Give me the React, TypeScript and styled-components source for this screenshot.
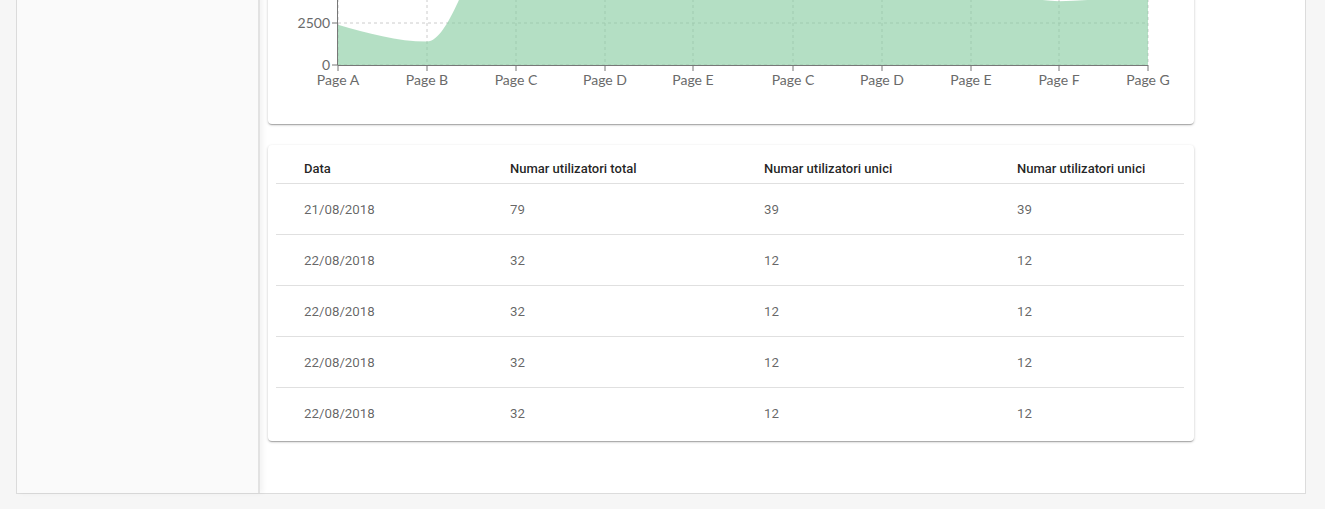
import React from "react";
import styled, { createGlobalStyle } from "styled-components";

const GlobalStyle = createGlobalStyle`
  *, *::before, *::after { box-sizing: border-box; }
  html, body { margin: 0; padding: 0; }
  body {
    background: #f6f6f6;
    font-family: Roboto, "Liberation Sans", Arial, sans-serif;
    overflow: hidden;
  }
`;

const Frame = styled.div`
  margin: -221px 19px 15px 16px;
  display: flex;
  border: 1px solid #dcdcdc;
  border-top: none;
  background: #fff;
  min-height: 700px;
`;

const Sidebar = styled.aside`
  width: 243px;
  flex: none;
  background: #fafafa;
  border-right: 2px solid #e2e2e2;
  box-shadow: 3px 0 5px rgba(0, 0, 0, 0.05);
  position: relative;
  z-index: 1;
`;

const Main = styled.main`
  flex: 1;
  padding: 20px 0 52px 8px;
  display: flex;
  flex-direction: column;
  gap: 21px;
`;

const Card = styled.section`
  width: 926px;
  background: #fff;
  border-radius: 4px;
  box-shadow: 0 1px 3px rgba(0, 0, 0, 0.2), 0 1px 1px rgba(0, 0, 0, 0.14),
    0 2px 1px -1px rgba(0, 0, 0, 0.12);
`;

const ChartCard = styled(Card)`
  padding: 16px 0 29px;
`;

const TableCard = styled(Card)`
  padding: 8px 10px 2px 8px;
`;

const ChartSvg = styled.svg`
  display: block;
  font-family: Lato, "Open Sans", sans-serif;
`;

const Table = styled.div`
  display: flex;
  flex-direction: column;
`;

const Row = styled.div<{ $head?: boolean }>`
  display: grid;
  grid-template-columns: 206px 254px 253px 1fr;
  align-items: center;
  height: ${(p) => (p.$head ? "31px" : "51px")};
  padding-left: 28px;
  border-bottom: 1px solid #e0e0e0;
  &:last-child { border-bottom: none; }
`;

const HeadCell = styled.div`
  font-size: 13px;
  font-weight: 500;
  color: rgba(0, 0, 0, 0.87);
  white-space: nowrap;
`;

const Cell = styled.div`
  font-size: 13.3px;
  color: rgba(0, 0, 0, 0.62);
  white-space: nowrap;
`;

type Pt = { x: number; y: number };

function monotonePath(pts: Pt[]): string {
  const n = pts.length;
  const sign = (v: number) => (v < 0 ? -1 : 1);
  const t: number[] = new Array(n).fill(0);
  for (let i = 1; i < n - 1; i++) {
    const h0 = pts[i].x - pts[i - 1].x;
    const h1 = pts[i + 1].x - pts[i].x;
    const s0 = (pts[i].y - pts[i - 1].y) / h0;
    const s1 = (pts[i + 1].y - pts[i].y) / h1;
    const p = (s0 * h1 + s1 * h0) / (h0 + h1);
    t[i] =
      (sign(s0) + sign(s1)) *
        Math.min(Math.abs(s0), Math.abs(s1), 0.5 * Math.abs(p)) || 0;
  }
  const h0 = pts[1].x - pts[0].x;
  t[0] = (3 * (pts[1].y - pts[0].y) / h0 - t[1]) / 2;
  const hn = pts[n - 1].x - pts[n - 2].x;
  t[n - 1] = (3 * (pts[n - 1].y - pts[n - 2].y) / hn - t[n - 2]) / 2;
  let d = `M${pts[0].x},${pts[0].y}`;
  for (let i = 0; i < n - 1; i++) {
    const a = pts[i];
    const b = pts[i + 1];
    const dx = (b.x - a.x) / 3;
    d += `C${a.x + dx},${a.y + dx * t[i]},${b.x - dx},${b.y - dx * t[i + 1]},${b.x},${b.y}`;
  }
  return d;
}

const data = [
  { name: "Page A", x: 70, v: 2400 },
  { name: "Page B", x: 159, v: 1398 },
  { name: "Page C", x: 248, v: 9800 },
  { name: "Page D", x: 337, v: 3908 },
  { name: "Page E", x: 425, v: 4800 },
  { name: "Page C", x: 525, v: 6200 },
  { name: "Page D", x: 614, v: 5400 },
  { name: "Page E", x: 703, v: 4800 },
  { name: "Page F", x: 791, v: 3800 },
  { name: "Page G", x: 880, v: 4300 },
];

const AXIS_Y = 250;
const LEFT_X = 70;
const RIGHT_X = 880;
const SCALE = 42 / 2500;
const yOf = (v: number) => AXIS_Y - v * SCALE;

const AreaChart: React.FC = () => {
  const pts = data.map((d) => ({ x: d.x, y: yOf(d.v) }));
  const line = monotonePath(pts);
  const area = `${line}L${RIGHT_X},${AXIS_Y}L${LEFT_X},${AXIS_Y}Z`;
  const yTicks = [0, 2500, 5000, 7500, 10000];
  return (
    <ChartSvg width={926} height={280} viewBox="0 0 926 280">
      <g stroke="#ccc" strokeDasharray="3 3" fill="none">
        {yTicks.map((v) => (
          <line key={v} x1={LEFT_X} x2={RIGHT_X} y1={yOf(v)} y2={yOf(v)} />
        ))}
        {data.map((d, i) => (
          <line key={i} x1={d.x} x2={d.x} y1={yOf(10000)} y2={AXIS_Y} />
        ))}
      </g>
      <path d={area} fill="#82ca9d" fillOpacity={0.6} stroke="none" />
      <g stroke="#777" fill="none">
        <line x1={LEFT_X} x2={RIGHT_X} y1={AXIS_Y + 0.5} y2={AXIS_Y + 0.5} />
        <line x1={LEFT_X - 0.5} x2={LEFT_X - 0.5} y1={yOf(10000)} y2={AXIS_Y} />
        {data.map((d, i) => (
          <line key={i} x1={d.x} x2={d.x} y1={AXIS_Y} y2={AXIS_Y + 6} />
        ))}
        {yTicks.map((v) => (
          <line key={v} x1={LEFT_X - 6} x2={LEFT_X} y1={yOf(v)} y2={yOf(v)} />
        ))}
      </g>
      <g fill="#6a6a6a" fontSize={14}>
        {data.map((d, i) => (
          <text key={i} x={d.x} y={AXIS_Y + 10} dy="0.71em" textAnchor="middle">
            {d.name}
          </text>
        ))}
        {yTicks.map((v) => (
          <text key={v} x={LEFT_X - 8} y={yOf(v)} dy="0.355em" textAnchor="end">
            {v}
          </text>
        ))}
      </g>
    </ChartSvg>
  );
};

const rows = [
  ["21/08/2018", "79", "39", "39"],
  ["22/08/2018", "32", "12", "12"],
  ["22/08/2018", "32", "12", "12"],
  ["22/08/2018", "32", "12", "12"],
  ["22/08/2018", "32", "12", "12"],
];

export default function App() {
  return (
    <>
      <GlobalStyle />
      <Frame>
        <Sidebar />
        <Main>
          <ChartCard>
            <AreaChart />
          </ChartCard>
          <TableCard>
            <Table>
              <Row $head>
                <HeadCell>Data</HeadCell>
                <HeadCell>Numar utilizatori total</HeadCell>
                <HeadCell>Numar utilizatori unici</HeadCell>
                <HeadCell>Numar utilizatori unici</HeadCell>
              </Row>
              {rows.map((r, i) => (
                <Row key={i}>
                  {r.map((c, j) => (
                    <Cell key={j}>{c}</Cell>
                  ))}
                </Row>
              ))}
            </Table>
          </TableCard>
        </Main>
      </Frame>
    </>
  );
}
